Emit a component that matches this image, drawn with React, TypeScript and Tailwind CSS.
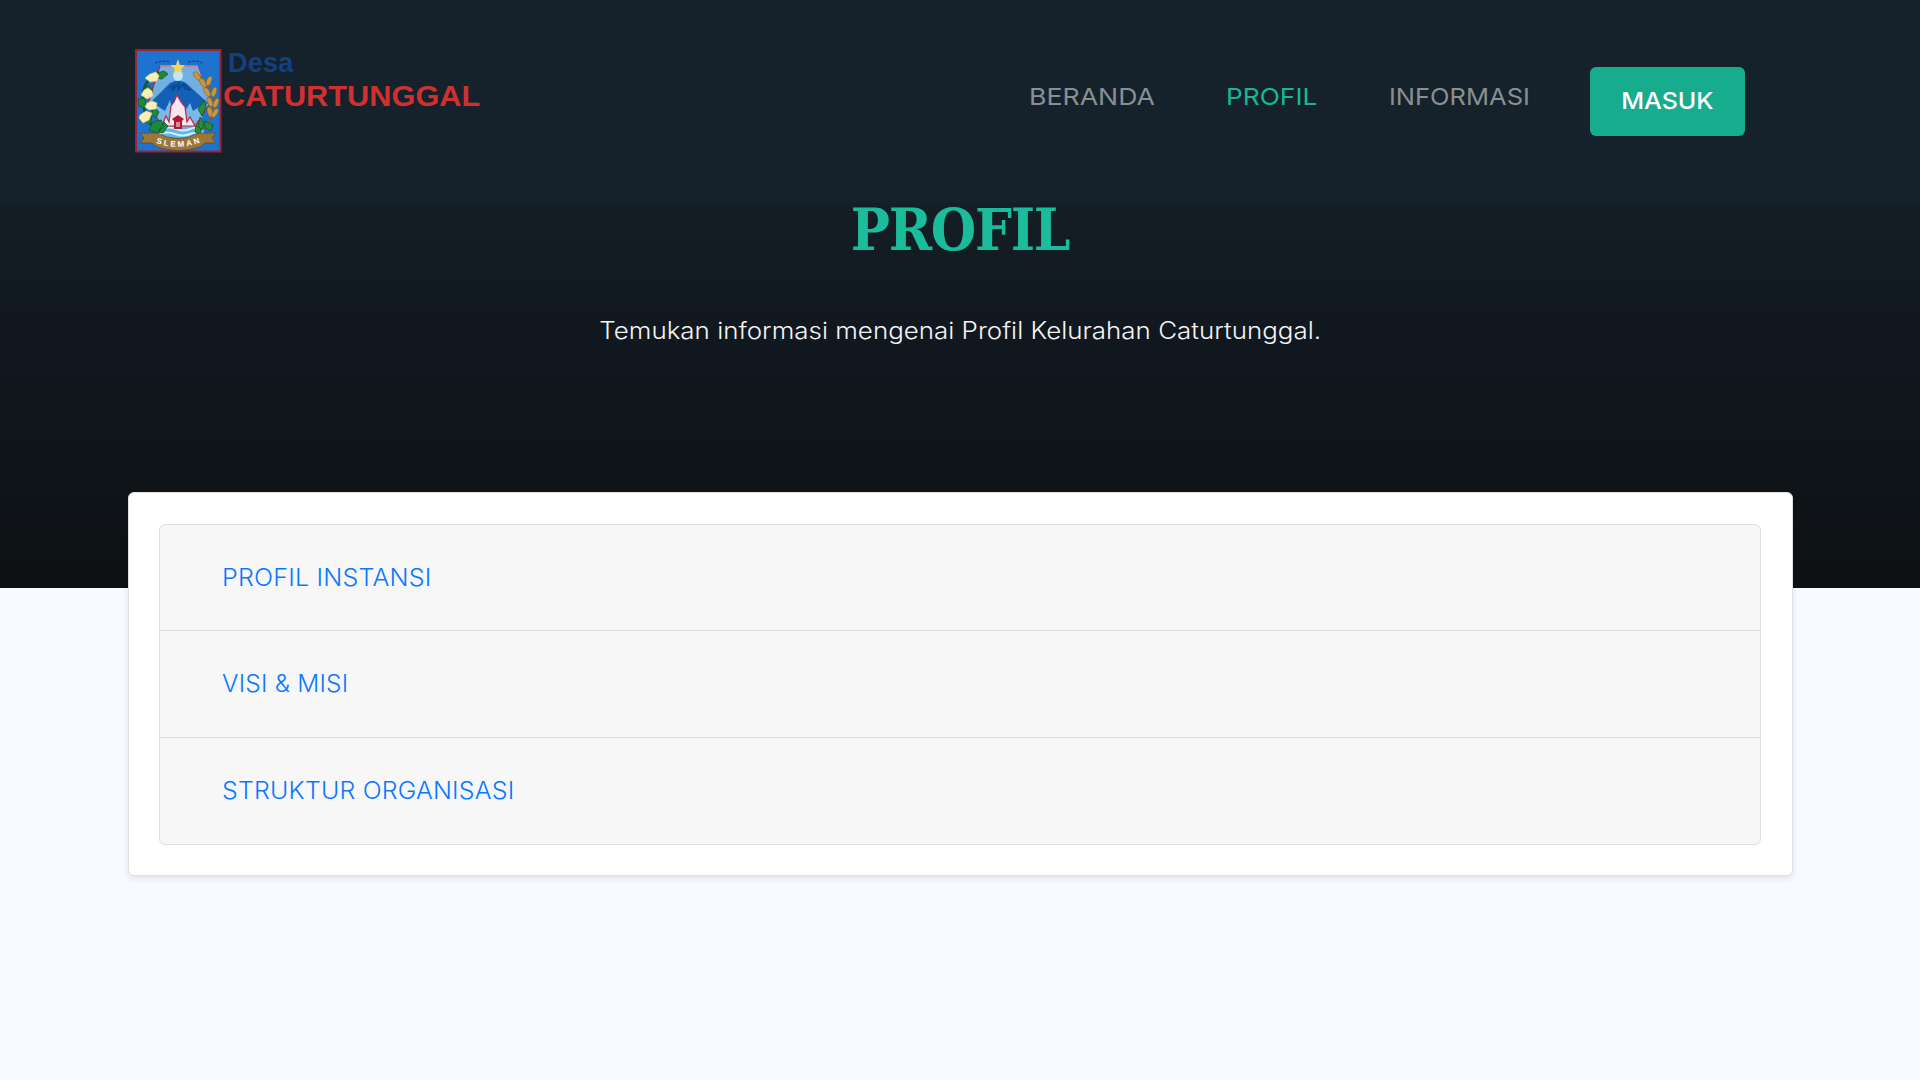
function Emblem() {
  return (
    <svg width="87" height="104" viewBox="0 0 87 104" className="shrink-0">
      <rect x="1" y="1" width="84.5" height="101.5" fill="#1c74d0" stroke="#9c2430" strokeWidth="2" />
      <path d="M20 14q6-3 14-1M53 13q9-2 14 1" fill="none" stroke="#164e95" strokeWidth="1.5" strokeDasharray="3 1" />
      <path d="M25 17L62 17L75 54L59 79H28L13 54Z" fill="#74afe2" stroke="#b52a3b" strokeWidth="1.3" />
      <path d="M25 17L62 17L75 54" fill="none" stroke="#f1eff3" strokeWidth=".7" />
      <path d="M15 54L35 34Q43 29 51 34L73 54L58 70H29Z" fill="#1460b7" />
      <path d="M34 39l5-3-2 6 7-8-1 7 5-6 2 5 5 1-7-7" fill="none" stroke="#0b458f" strokeWidth="1.4" />
      <path d="M18 54l12 8 5-11 2 10 6-10 7 11 5-8 3 8 13-9-5 18H26Z" fill="#79b8e9" />
      <circle cx="43" cy="27" r="5" fill="#c1e4fa" />
      <path d="M43 10L44.8 16L50 16L46 20L48 25L43 22L38 25L40 20L35 16L41 16Z" fill="#f5d65a" />
      <path d="M26 76L68 76L70 89L20 89Z" fill="#5eb6e9" />
      <path d="M27 80q7-3 14 0t14 0t12 0M24 85q8-3 16 0t15 0t13 0" fill="none" stroke="#d1effa" strokeWidth="2" />
      <path d="M27 77L31 67L34 73L36 57L39 53L42 46L46 53L50 58L52 73L55 68L60 77Z" fill="#f9e6ed" stroke="#c3263c" strokeWidth="1.2" />
      <path d="M37 70L43 66L49 70L47 72V80H39V72Z" fill="#ae1c34" />
      <path d="M41 73v5h4v-5Z" fill="#d98a96" />
      <path d="M24 23q-17 8-16 28q1 22 17 32" fill="none" stroke="#145725" strokeWidth="2.5" />
      <path d="M22 24l7-2 4 3-6 5-6-1ZM9 40l5-4 4 7-6 5ZM3 50l7-1 1 10-7-2ZM19 58l5 5-3 6-5-4ZM18 73l8-2 3 6-7 7-8-3ZM29 73l4 4-5 7-5-1ZM11 64l6 4-2 8-5-3Z" fill="#1c8a3d" stroke="#105824" strokeWidth=".8" />
      <path d="M15 25l6-2 3 4-2 5-7 1-5-4ZM9 41l4-2 4 3 1 5-6 3-6-4ZM12 54l5-2 5 2-1 6-7 1-4-3ZM5 66l6-4 6 2-3 7-6 3-4-5Z" fill="#f9efb5" stroke="#dfca75" strokeWidth=".6" />
      <path d="M62 25Q81 40 79 57Q77 70 68 80" fill="none" stroke="#865e27" strokeWidth="2" />
      <g fill="#c79746" stroke="#86642d" strokeWidth=".6">
        <ellipse cx="62" cy="27" rx="2.5" ry="5" transform="rotate(-38 62 27)" />
        <ellipse cx="68" cy="34" rx="2.5" ry="5" transform="rotate(-28 68 34)" />
        <ellipse cx="74" cy="32" rx="2.4" ry="5" transform="rotate(22 74 32)" />
        <ellipse cx="72" cy="43" rx="2.5" ry="5" transform="rotate(-30 72 43)" />
        <ellipse cx="79" cy="43" rx="2.3" ry="5" transform="rotate(18 79 43)" />
        <ellipse cx="75" cy="53" rx="2.5" ry="5" transform="rotate(-23 75 53)" />
        <ellipse cx="81" cy="54" rx="2.3" ry="5" transform="rotate(22 81 54)" />
        <ellipse cx="75" cy="63" rx="2.5" ry="5" transform="rotate(-15 75 63)" />
        <ellipse cx="80" cy="64" rx="2.3" ry="5" transform="rotate(30 80 64)" />
      </g>
      <path d="M69 51l2 7-4 9-4-7ZM65 68l4 5-2 8-4-4ZM70 72l8 4-2 6-6-3ZM61 76l5 4-1 6-5-3Z" fill="#268f37" stroke="#125422" strokeWidth=".8" />
      <path d="M5 84L22 84Q43 95 64 84H81L77 89L81 94L70 94L65 98Q43 105 22 98L17 94H5L9 89Z" fill="#9c7738" stroke="#5f4a2a" strokeWidth=".8" />
      <path id="ribbon-text-line" d="M21 94Q43 102 67 93" fill="none" />
      <text fontFamily="Liberation Sans" fontSize="8" fontWeight="700" fill="#fff" letterSpacing="2.2">
        <textPath href="#ribbon-text-line">SLEMAN</textPath>
      </text>
    </svg>
  );
}

const sections = [
  { title: "PROFIL INSTANSI", fit: "scale-x-[1.065]", row: "h-[106px] border-b" },
  { title: "VISI & MISI", fit: "scale-x-[1.04]", row: "h-[107px] border-b" },
  { title: "STRUKTUR ORGANISASI", fit: "scale-x-[1.06]", row: "h-[105px]" },
];

export default function App() {
  return (
    <div className="h-[1080px] w-[1920px] overflow-hidden bg-[#f7faff] font-['Inter',sans-serif]">
      <header className="flex h-[203px] items-start bg-[#15222b] pl-[135px]">
        <a href="#" className="mt-[49px] flex w-[400px] font-['Liberation_Sans',sans-serif] font-bold">
          <Emblem />
          <span className="block whitespace-nowrap pl-[1px]">
            <span className="block pl-[5px] text-[27px] leading-[28px] tracking-[0.2px] text-[#144080]">Desa</span>
            <span className="mt-[2px] block origin-left scale-x-[1.06] text-[29px] leading-[34px] text-[#d03030]">CATURTUNGGAL</span>
          </span>
        </a>
        <nav className="ml-[494px] flex text-[23.5px] leading-[30px] whitespace-nowrap text-[#8a8f93]">
          <a href="#" className="mt-[82px] w-[197px]"><span className="inline-block origin-left scale-x-[1.135]">BERANDA</span></a>
          <a href="#" className="mt-[82px] w-[163px] text-[#18b695]"><span className="inline-block origin-left scale-x-[1.12]">PROFIL</span></a>
          <a href="#" className="mt-[82px] w-[201px]"><span className="inline-block origin-left scale-x-[1.085]">INFORMASI</span></a>
          <a href="#" className="mt-[67px] flex h-[69px] w-[155px] items-center justify-center rounded-[6px] bg-[#18ac8f] pb-[2px] font-medium text-white"><span className="inline-block scale-x-[1.065]">MASUK</span></a>
        </nav>
      </header>
      <section className="flex h-[385px] flex-col items-center bg-linear-to-b from-[#151e25] via-[#111820] via-30% to-[#0d1113]">
        <h1 className="mt-[-8px] font-['DejaVu_Serif_Condensed','DejaVu_Serif',serif] text-[58px] leading-[70px] font-bold tracking-[-1.3px] text-[#1abc9c] [font-stretch:condensed]">PROFIL</h1>
        <p className="mt-[48px] scale-x-[1.103] text-[23.5px] leading-[36px] font-light whitespace-nowrap text-[#f4f5f5]">Temukan informasi mengenai Profil Kelurahan Caturtunggal.</p>
      </section>
      <main className="relative mx-[128px] mt-[-96px] h-[384px] w-[1665px] rounded-[6px] border border-[#dfdfdf] bg-white px-[30px] pt-[31px] shadow-[0_3px_6px_rgba(0,0,0,0.09)]">
        <div className="h-[321px] w-[1602px] rounded-[6px] border border-[#dfdfdf] bg-[#f7f7f7]">
          {sections.map((section) => (
            <div key={section.title} className={`flex items-center border-[#dfdfdf] pl-[62px] text-[23.5px] font-light text-[#0a78ff] ${section.row}`}>
              <a href="#" className={`inline-block origin-left tracking-[0.2px] ${section.fit}`}>{section.title}</a>
            </div>
          ))}
        </div>
      </main>
    </div>
  );
}
